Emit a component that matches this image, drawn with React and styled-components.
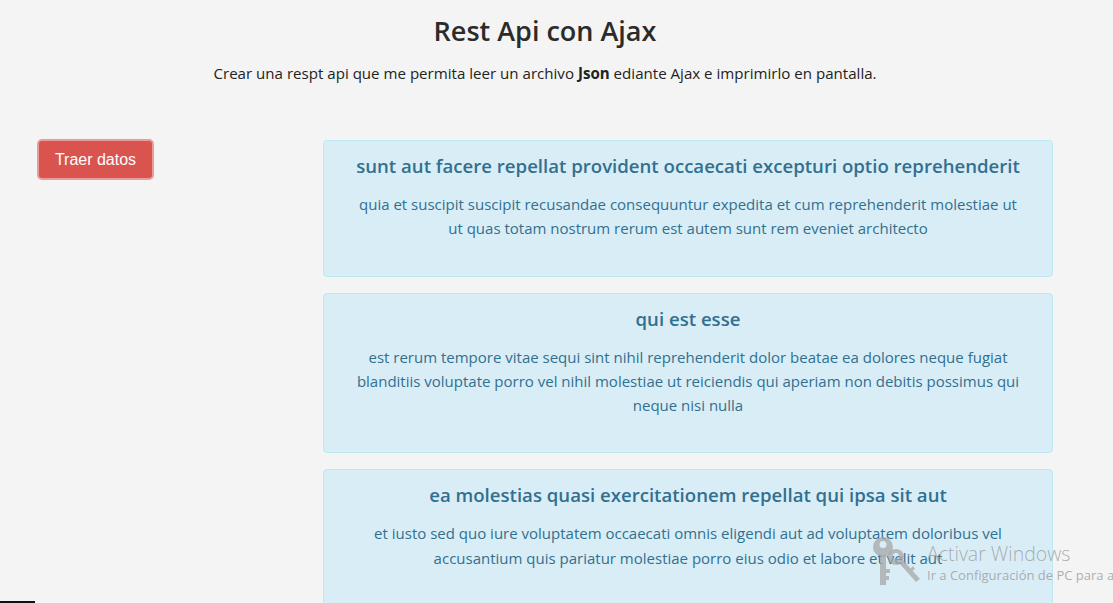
import React from "react";
import styled, { createGlobalStyle } from "styled-components";

const Global = createGlobalStyle`
  html, body { margin: 0; padding: 0; }
  body {
    background: #f4f4f4;
    font-family: "Open Sans", "Noto Sans", sans-serif;
    color: #222;
    overflow: hidden;
  }
`;

const Page = styled.div`
  width: 1113px;
  height: 603px;
  position: relative;
  overflow: hidden;
`;

const Header = styled.header`
  width: 1090px;
  text-align: center;
  padding-top: 14px;
`;

const Title = styled.h1`
  margin: 0;
  font-size: 27px;
  font-weight: 600;
  line-height: 34px;
  color: #2b2b2b;
`;

const Lead = styled.p`
  margin: 15px 0 0;
  font-size: 15.1px;
  line-height: 20px;
  color: #222;
  b { font-weight: 700; }
`;

const Main = styled.div`
  display: flex;
  align-items: flex-start;
  margin-top: 57px;
`;

const Side = styled.div`
  width: 323px;
  padding-left: 37px;
  box-sizing: border-box;
  flex-shrink: 0;
`;

const Button = styled.button`
  font-family: "Liberation Sans", Arial, sans-serif;
  font-size: 16px;
  color: #fff;
  background: #d9534f;
  border: 2px solid #ec9b98;
  border-radius: 5px;
  width: 117px;
  height: 41px;
  padding: 0;
  margin-top: -1px;
  cursor: pointer;
`;

const List = styled.div`
  width: 730px;
  display: flex;
  flex-direction: column;
  gap: 16px;
`;

const Alert = styled.div`
  background: #d9edf7;
  border: 1px solid #bce8f1;
  border-radius: 4px;
  color: #31708f;
  text-align: center;
  padding: 14px 29px 15px;
`;

const AlertTitle = styled.h4`
  margin: 0 0 15px;
  font-size: 18.6px;
  line-height: 22px;
  font-weight: 600;
`;

const AlertText = styled.p`
  margin: 0 0 20px;
  font-size: 15px;
  line-height: 24.3px;
`;

const Watermark = styled.div`
  position: absolute;
  left: 872px;
  top: 535px;
  display: flex;
  gap: 5px;
  pointer-events: none;
  white-space: nowrap;
`;

const WmText = styled.div`
  display: flex;
  flex-direction: column;
  padding-top: 7px;
  color: rgba(155, 155, 155, 0.8);
  font-family: "Open Sans", sans-serif;
`;

const WmTitle = styled.span`
  font-size: 19.5px;
  font-weight: 300;
  line-height: 24px;
`;

const WmSub = styled.span`
  font-size: 13px;
  line-height: 19px;
`;

const TaskbarNub = styled.div`
  position: absolute;
  left: 0;
  bottom: 0;
  width: 35px;
  height: 2px;
  background: #111;
`;

const posts = [
  {
    title: "sunt aut facere repellat provident occaecati excepturi optio reprehenderit",
    body: "quia et suscipit suscipit recusandae consequuntur expedita et cum reprehenderit molestiae ut ut quas totam nostrum rerum est autem sunt rem eveniet architecto",
  },
  {
    title: "qui est esse",
    body: "est rerum tempore vitae sequi sint nihil reprehenderit dolor beatae ea dolores neque fugiat blanditiis voluptate porro vel nihil molestiae ut reiciendis qui aperiam non debitis possimus qui neque nisi nulla",
  },
  {
    title: "ea molestias quasi exercitationem repellat qui ipsa sit aut",
    body: "et iusto sed quo iure voluptatem occaecati omnis eligendi aut ad voluptatem doloribus vel accusantium quis pariatur molestiae porro eius odio et labore et velit aut",
  },
];

function KeyIcon() {
  return (
    <svg width="50" height="52" viewBox="0 0 50 52">
      <g fill="rgba(165,165,165,0.75)">
        <path fillRule="evenodd" d="M11 2 a10 10 0 1 1 0 20 a10 10 0 1 1 0 -20 Z M11 6 a3.5 3.5 0 1 0 0 7 a3.5 3.5 0 1 0 0 -7 Z" />
        <path d="M8 20 h6 v30 h-6 Z M14 34 h4 v4 h-4 Z M14 41 h3 v4 h-3 Z" />
        <path fillRule="evenodd" d="M24 14 a8 8 0 1 1 0 16 a8 8 0 1 1 0 -16 Z M24 18 a3 3 0 1 0 0 6 a3 3 0 1 0 0 -6 Z" />
        <path d="M27 28 L31 25 L48 44 L44 47 Z M38 34 L41 31 L43 34 L40 36 Z" />
      </g>
    </svg>
  );
}

export default function App() {
  return (
    <Page>
      <Global />
      <Header>
        <Title>Rest Api con Ajax</Title>
        <Lead>
          Crear una respt api que me permita leer un archivo <b>Json</b> ediante Ajax e imprimirlo en pantalla.
        </Lead>
      </Header>
      <Main>
        <Side>
          <Button>Traer datos</Button>
        </Side>
        <List>
          {posts.map((p) => (
            <Alert key={p.title}>
              <AlertTitle>{p.title}</AlertTitle>
              <AlertText>{p.body}</AlertText>
            </Alert>
          ))}
        </List>
      </Main>
      <Watermark>
        <KeyIcon />
        <WmText>
          <WmTitle>Activar Windows</WmTitle>
          <WmSub>Ir a Configuración de PC para activar Windows.</WmSub>
        </WmText>
      </Watermark>
      <TaskbarNub />
    </Page>
  );
}
